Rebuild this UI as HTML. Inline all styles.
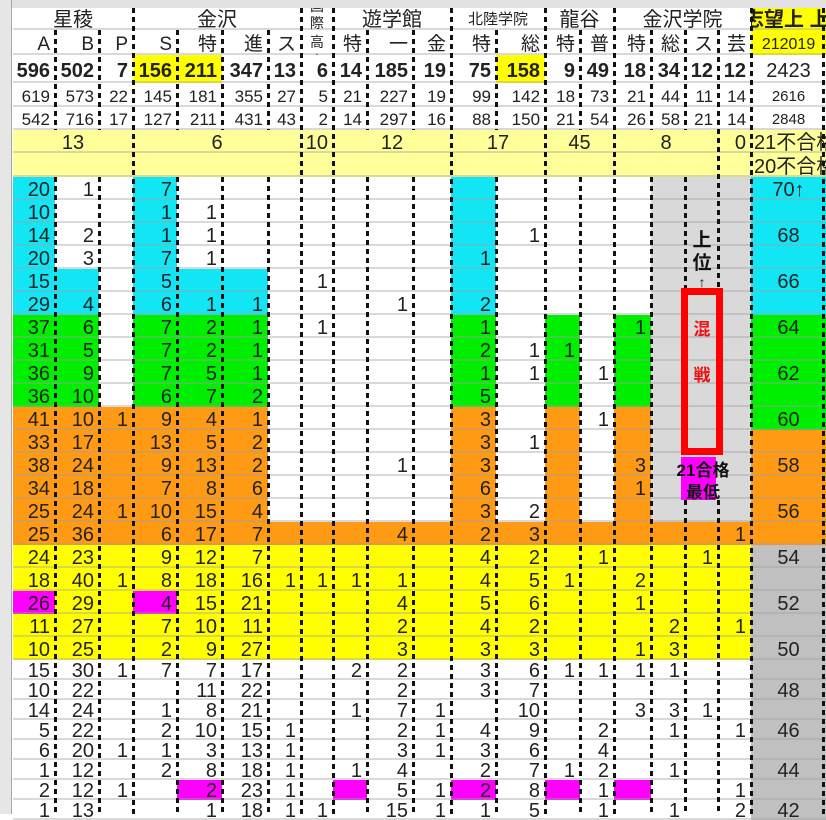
<!DOCTYPE html>
<html><head><meta charset="utf-8"><style>
*{margin:0;padding:0;box-sizing:border-box}
body{width:826px;height:814px;overflow:hidden;background:#fff;position:relative;font-family:"Liberation Sans","Noto Sans CJK JP",sans-serif;color:#222}
table{position:absolute;left:13px;top:8px;width:813px;table-layout:fixed;border-collapse:separate;border-spacing:0}
td{padding:0 5px 0 0;text-align:right;vertical-align:bottom;line-height:20px;font-size:20px;white-space:nowrap;overflow:hidden;box-shadow:inset 0 -2px 0 rgba(160,160,160,.4)}
tr.d td{height:23px}
tr.w td{height:20px;line-height:17px}
tr.h0 td{height:22px;text-align:center;padding:0}
tr.h1 td{height:25px;font-size:19px}
tr.h2 td{height:28px;font-weight:bold;line-height:24px}
tr.h3 td{height:24px;font-size:17px}
tr.h4 td{height:23px;font-size:17px}
tr.yl td{height:23px;background:#ffff99}
tr.yl2 td{height:24px;background:#ffff99}
.c{background:#12e6f4}.g{background:#00ee00}.o{background:#ff9a14}.y{background:#ffff00}.m{background:#ff00ff}.k{background:#d9d9d9}.s{background:#c0c0c0}.yy{background:#ffff00}
td.z{text-align:center;padding:0}
.ds{position:absolute;width:3px;background:repeating-linear-gradient(to bottom,#111 0 5px,transparent 5px 9px);z-index:2}
.ov{position:absolute;z-index:5;font-weight:bold;text-align:center}
</style></head><body>
<div style="position:absolute;left:0;top:0;width:826px;height:8px;background:#e2e2e2"></div>
<div style="position:absolute;left:0;top:0;width:12px;height:814px;background:#e6e6e6;border-right:1px solid #a8a8a8"></div>
<table>
<colgroup><col style="width:42px"><col style="width:44px"><col style="width:34px"><col style="width:44px"><col style="width:45px"><col style="width:46px"><col style="width:33px"><col style="width:32px"><col style="width:34px"><col style="width:46px"><col style="width:38px"><col style="width:45px"><col style="width:49px"><col style="width:35px"><col style="width:34px"><col style="width:37px"><col style="width:34px"><col style="width:33px"><col style="width:33px"><col style="width:75px"></colgroup>
<tr class="h0"><td colspan="3">星稜</td><td colspan="4">金沢</td><td></td><td colspan="3">遊学館</td><td colspan="2" style="font-size:15px">北陸学院</td><td colspan="2">龍谷</td><td colspan="4">金沢学院</td><td style="background:#ffff00;text-align:left;font-weight:bold;text-indent:-7px">志望上 上</td></tr>
<tr class="h1"><td>A</td><td>B</td><td>P</td><td>S</td><td>特</td><td>進</td><td>ス</td><td></td><td>特</td><td>一</td><td>金</td><td>特</td><td>総</td><td>特</td><td>普</td><td>特</td><td>総</td><td>ス</td><td>芸</td><td class="z" style="background:#ffff00;font-size:16px">212019</td></tr>
<tr class="h2"><td>596</td><td>502</td><td>7</td><td class="yy">156</td><td class="yy">211</td><td>347</td><td>13</td><td>6</td><td>14</td><td>185</td><td>19</td><td>75</td><td class="yy">158</td><td>9</td><td>49</td><td>18</td><td>34</td><td>12</td><td>12</td><td class="z" style="font-weight:normal">2423</td></tr>
<tr class="h3"><td>619</td><td>573</td><td>22</td><td>145</td><td>181</td><td>355</td><td>27</td><td>5</td><td>21</td><td>227</td><td>19</td><td>99</td><td>142</td><td>18</td><td>73</td><td>21</td><td>44</td><td>11</td><td>14</td><td class="z" style="font-size:15px">2616</td></tr>
<tr class="h4"><td>542</td><td>716</td><td>17</td><td>127</td><td>211</td><td>431</td><td>43</td><td>2</td><td>14</td><td>297</td><td>16</td><td>88</td><td>150</td><td>21</td><td>54</td><td>26</td><td>58</td><td>21</td><td>14</td><td class="z" style="font-size:15px">2848</td></tr>
<tr class="yl"><td colspan="3" class="z">13</td><td colspan="4" class="z">6</td><td>10</td><td colspan="3" class="z">12</td><td colspan="2" class="z">17</td><td colspan="2" class="z">45</td><td colspan="3" class="z">8</td><td>0</td><td style="text-align:left;padding-left:3px">21不合格</td></tr>
<tr class="yl2"><td colspan="3"></td><td colspan="4"></td><td></td><td colspan="3"></td><td colspan="2"></td><td colspan="2"></td><td colspan="3"></td><td></td><td style="text-align:left;padding-left:3px">20不合格</td></tr>
<tr class="d"><td class="c">20</td><td>1</td><td></td><td class="c">7</td><td></td><td></td><td></td><td></td><td></td><td></td><td></td><td class="c"></td><td></td><td></td><td></td><td></td><td class="k"></td><td class="k"></td><td class="k"></td><td class="c z">70↑</td></tr>
<tr class="d"><td class="c">10</td><td></td><td></td><td class="c">1</td><td>1</td><td></td><td></td><td></td><td></td><td></td><td></td><td class="c"></td><td></td><td></td><td></td><td></td><td class="k"></td><td class="k"></td><td class="k"></td><td class="c z"></td></tr>
<tr class="d"><td class="c">14</td><td>2</td><td></td><td class="c">1</td><td>1</td><td></td><td></td><td></td><td></td><td></td><td></td><td class="c"></td><td>1</td><td></td><td></td><td></td><td class="k"></td><td class="k"></td><td class="k"></td><td class="c z">68</td></tr>
<tr class="d"><td class="c">20</td><td>3</td><td></td><td class="c">7</td><td>1</td><td></td><td></td><td></td><td></td><td></td><td></td><td class="c">1</td><td></td><td></td><td></td><td></td><td class="k"></td><td class="k"></td><td class="k"></td><td class="c z"></td></tr>
<tr class="d"><td class="c">15</td><td class="c"></td><td></td><td class="c">5</td><td class="c"></td><td class="c"></td><td></td><td>1</td><td></td><td></td><td></td><td class="c"></td><td></td><td></td><td></td><td></td><td class="k"></td><td class="k"></td><td class="k"></td><td class="c z">66</td></tr>
<tr class="d"><td class="c">29</td><td class="c">4</td><td></td><td class="c">6</td><td class="c">1</td><td class="c">1</td><td></td><td></td><td></td><td>1</td><td></td><td class="c">2</td><td></td><td></td><td></td><td></td><td class="k"></td><td class="k"></td><td class="k"></td><td class="c z"></td></tr>
<tr class="d"><td class="g">37</td><td class="g">6</td><td></td><td class="g">7</td><td class="g">2</td><td class="g">1</td><td></td><td>1</td><td></td><td></td><td></td><td class="g">1</td><td></td><td class="g"></td><td></td><td class="g">1</td><td class="k"></td><td class="k"></td><td class="k"></td><td class="g z">64</td></tr>
<tr class="d"><td class="g">31</td><td class="g">5</td><td></td><td class="g">7</td><td class="g">2</td><td class="g">1</td><td></td><td></td><td></td><td></td><td></td><td class="g">2</td><td>1</td><td class="g">1</td><td></td><td class="g"></td><td class="k"></td><td class="k"></td><td class="k"></td><td class="g z"></td></tr>
<tr class="d"><td class="g">36</td><td class="g">9</td><td></td><td class="g">7</td><td class="g">5</td><td class="g">1</td><td></td><td></td><td></td><td></td><td></td><td class="g">1</td><td>1</td><td class="g"></td><td>1</td><td class="g"></td><td class="k"></td><td class="k"></td><td class="k"></td><td class="g z">62</td></tr>
<tr class="d"><td class="g">36</td><td class="g">10</td><td></td><td class="g">6</td><td class="g">7</td><td class="g">2</td><td></td><td></td><td></td><td></td><td></td><td class="g">5</td><td></td><td class="g"></td><td></td><td class="g"></td><td class="k"></td><td class="k"></td><td class="k"></td><td class="g z"></td></tr>
<tr class="d"><td class="o">41</td><td class="o">10</td><td class="o">1</td><td class="o">9</td><td class="o">4</td><td class="o">1</td><td></td><td></td><td></td><td></td><td></td><td class="o">3</td><td></td><td class="o"></td><td>1</td><td class="o"></td><td class="k"></td><td class="k"></td><td class="k"></td><td class="g z">60</td></tr>
<tr class="d"><td class="o">33</td><td class="o">17</td><td class="o"></td><td class="o">13</td><td class="o">5</td><td class="o">2</td><td></td><td></td><td></td><td></td><td></td><td class="o">3</td><td>1</td><td class="o"></td><td></td><td class="o"></td><td class="k"></td><td class="k"></td><td class="k"></td><td class="o z"></td></tr>
<tr class="d"><td class="o">38</td><td class="o">24</td><td class="o"></td><td class="o">9</td><td class="o">13</td><td class="o">2</td><td></td><td></td><td></td><td>1</td><td></td><td class="o">3</td><td></td><td class="o"></td><td></td><td class="o">3</td><td class="k"></td><td class="k"></td><td class="k"></td><td class="o z">58</td></tr>
<tr class="d"><td class="o">34</td><td class="o">18</td><td class="o"></td><td class="o">7</td><td class="o">8</td><td class="o">6</td><td></td><td></td><td></td><td></td><td></td><td class="o">6</td><td></td><td class="o"></td><td></td><td class="o">1</td><td class="k"></td><td class="k"></td><td class="k"></td><td class="o z"></td></tr>
<tr class="d"><td class="o">25</td><td class="o">24</td><td class="o">1</td><td class="o">10</td><td class="o">15</td><td class="o">4</td><td></td><td></td><td></td><td></td><td></td><td class="o">3</td><td>2</td><td class="o"></td><td></td><td class="o"></td><td class="k"></td><td class="k"></td><td class="k"></td><td class="o z">56</td></tr>
<tr class="d"><td class="o">25</td><td class="o">36</td><td class="o"></td><td class="o">6</td><td class="o">17</td><td class="o">7</td><td class="o"></td><td class="o"></td><td class="o"></td><td class="o">4</td><td class="o"></td><td class="o">2</td><td class="o">3</td><td class="o"></td><td class="o"></td><td class="o"></td><td class="o"></td><td class="o"></td><td class="o">1</td><td class="o z"></td></tr>
<tr class="d"><td class="y">24</td><td class="y">23</td><td class="y"></td><td class="y">9</td><td class="y">12</td><td class="y">7</td><td class="y"></td><td class="y"></td><td class="y"></td><td class="y"></td><td class="y"></td><td class="y">4</td><td class="y">2</td><td class="y"></td><td class="y">1</td><td class="y"></td><td class="y"></td><td class="y">1</td><td class="y"></td><td class="s z">54</td></tr>
<tr class="d"><td class="y">18</td><td class="y">40</td><td class="y">1</td><td class="y">8</td><td class="y">18</td><td class="y">16</td><td class="y">1</td><td class="y">1</td><td class="y">1</td><td class="y">1</td><td class="y"></td><td class="y">4</td><td class="y">5</td><td class="y">1</td><td class="y"></td><td class="y">2</td><td class="y"></td><td class="y"></td><td class="y"></td><td class="s z"></td></tr>
<tr class="d"><td class="m">26</td><td class="y">29</td><td class="y"></td><td class="m">4</td><td class="y">15</td><td class="y">21</td><td class="y"></td><td class="y"></td><td class="y"></td><td class="y">4</td><td class="y"></td><td class="y">5</td><td class="y">6</td><td class="y"></td><td class="y"></td><td class="y">1</td><td class="y"></td><td class="y"></td><td class="y"></td><td class="s z">52</td></tr>
<tr class="d"><td class="y">11</td><td class="y">27</td><td class="y"></td><td class="y">7</td><td class="y">10</td><td class="y">11</td><td class="y"></td><td class="y"></td><td class="y"></td><td class="y">2</td><td class="y"></td><td class="y">4</td><td class="y">2</td><td class="y"></td><td class="y"></td><td class="y"></td><td class="y">2</td><td class="y"></td><td class="y">1</td><td class="s z"></td></tr>
<tr class="d"><td class="y">10</td><td class="y">25</td><td class="y"></td><td class="y">2</td><td class="y">9</td><td class="y">27</td><td class="y"></td><td class="y"></td><td class="y"></td><td class="y">3</td><td class="y"></td><td class="y">3</td><td class="y">3</td><td class="y"></td><td class="y"></td><td class="y">1</td><td class="y">3</td><td class="y"></td><td class="y"></td><td class="s z">50</td></tr>
<tr class="w"><td>15</td><td>30</td><td>1</td><td>7</td><td>7</td><td>17</td><td></td><td></td><td>2</td><td>2</td><td></td><td>3</td><td>6</td><td>1</td><td>1</td><td>1</td><td>1</td><td></td><td></td><td class="s z"></td></tr>
<tr class="w"><td>10</td><td>22</td><td></td><td></td><td>11</td><td>22</td><td></td><td></td><td></td><td>2</td><td></td><td>3</td><td>7</td><td></td><td></td><td></td><td></td><td></td><td></td><td class="s z">48</td></tr>
<tr class="w"><td>14</td><td>24</td><td></td><td>1</td><td>8</td><td>21</td><td></td><td></td><td>1</td><td>7</td><td>1</td><td></td><td>10</td><td></td><td></td><td>3</td><td>3</td><td>1</td><td></td><td class="s z"></td></tr>
<tr class="w"><td>5</td><td>22</td><td></td><td>2</td><td>10</td><td>15</td><td>1</td><td></td><td></td><td>2</td><td>1</td><td>4</td><td>9</td><td></td><td>2</td><td></td><td>1</td><td></td><td>1</td><td class="s z">46</td></tr>
<tr class="w"><td>6</td><td>20</td><td>1</td><td>1</td><td>3</td><td>13</td><td>1</td><td></td><td></td><td>3</td><td>1</td><td>3</td><td>6</td><td></td><td>4</td><td></td><td></td><td></td><td></td><td class="s z"></td></tr>
<tr class="w"><td>1</td><td>12</td><td></td><td>2</td><td>8</td><td>18</td><td>1</td><td></td><td>1</td><td>4</td><td></td><td>2</td><td>7</td><td>1</td><td>2</td><td></td><td>1</td><td></td><td></td><td class="s z">44</td></tr>
<tr class="w"><td>2</td><td>12</td><td>1</td><td></td><td class="m">2</td><td>23</td><td>1</td><td></td><td class="m"></td><td>5</td><td>1</td><td class="m">2</td><td>8</td><td class="m"></td><td>1</td><td class="m"></td><td></td><td></td><td>1</td><td class="s z"></td></tr>
<tr class="w"><td>1</td><td>13</td><td></td><td></td><td>1</td><td>18</td><td>1</td><td>1</td><td></td><td>15</td><td>1</td><td>1</td><td>5</td><td></td><td>1</td><td></td><td>1</td><td></td><td>2</td><td class="s z">42</td></tr>
</table>

<div style="position:absolute;left:301px;top:8px;width:32px;height:47px;overflow:hidden;z-index:3;font-size:14px;line-height:20px;text-align:center">
<div style="position:absolute;left:0;width:32px;top:-12px">国</div>
<div style="position:absolute;left:0;width:32px;top:5px">際</div>
<div style="position:absolute;left:0;width:32px;top:24px">高</div>
<div style="position:absolute;left:0;width:32px;top:43px">専</div>
</div>

<div class="ds" style="left:132px;top:8px;height:806px"></div>
<div class="ds" style="left:300px;top:8px;height:806px"></div>
<div class="ds" style="left:332px;top:8px;height:806px"></div>
<div class="ds" style="left:450px;top:8px;height:806px"></div>
<div class="ds" style="left:544px;top:8px;height:806px"></div>
<div class="ds" style="left:613px;top:8px;height:806px"></div>
<div class="ds" style="left:750px;top:8px;height:806px"></div>
<div class="ds" style="left:822px;top:8px;height:806px"></div>
<div class="ds" style="left:54px;top:30px;height:100px"></div><div class="ds" style="left:54px;top:177px;height:637px"></div>
<div class="ds" style="left:98px;top:30px;height:100px"></div><div class="ds" style="left:98px;top:177px;height:637px"></div>
<div class="ds" style="left:176px;top:30px;height:100px"></div><div class="ds" style="left:176px;top:177px;height:637px"></div>
<div class="ds" style="left:221px;top:30px;height:100px"></div><div class="ds" style="left:221px;top:177px;height:637px"></div>
<div class="ds" style="left:267px;top:30px;height:100px"></div><div class="ds" style="left:267px;top:177px;height:637px"></div>
<div class="ds" style="left:366px;top:30px;height:100px"></div><div class="ds" style="left:366px;top:177px;height:637px"></div>
<div class="ds" style="left:412px;top:30px;height:100px"></div><div class="ds" style="left:412px;top:177px;height:637px"></div>
<div class="ds" style="left:495px;top:30px;height:100px"></div><div class="ds" style="left:495px;top:177px;height:637px"></div>
<div class="ds" style="left:579px;top:30px;height:100px"></div><div class="ds" style="left:579px;top:177px;height:637px"></div>
<div class="ds" style="left:650px;top:30px;height:100px"></div><div class="ds" style="left:650px;top:177px;height:637px"></div>
<div class="ds" style="left:684px;top:30px;height:100px"></div><div class="ds" style="left:684px;top:177px;height:111px"></div><div class="ds" style="left:684px;top:500px;height:314px"></div>
<div class="ds" style="left:717px;top:30px;height:258px"></div><div class="ds" style="left:717px;top:500px;height:314px"></div>

<div class="ov" style="left:682px;top:229px;width:40px;font-size:19px;line-height:23px;color:#111">上<br>位</div>
<div class="ov" style="left:682px;top:274px;width:40px;font-size:14px;line-height:16px;font-weight:normal;color:#111">↑</div>
<div style="position:absolute;left:681px;top:288px;width:42px;height:167px;border:7px solid #ff0000;z-index:4"></div>
<div class="ov" style="left:682px;top:320px;width:40px;font-size:17px;line-height:20px;color:#ee1111">混</div>
<div class="ov" style="left:682px;top:366px;width:40px;font-size:17px;line-height:20px;color:#ee1111">戦</div>
<div style="position:absolute;left:681px;top:457px;width:35px;height:43px;background:#ff00ff;z-index:4"></div>
<div class="ov" style="left:660px;top:460px;width:86px;font-size:17px;line-height:22px;color:#111">21合格<br>最低</div>
</body></html>
